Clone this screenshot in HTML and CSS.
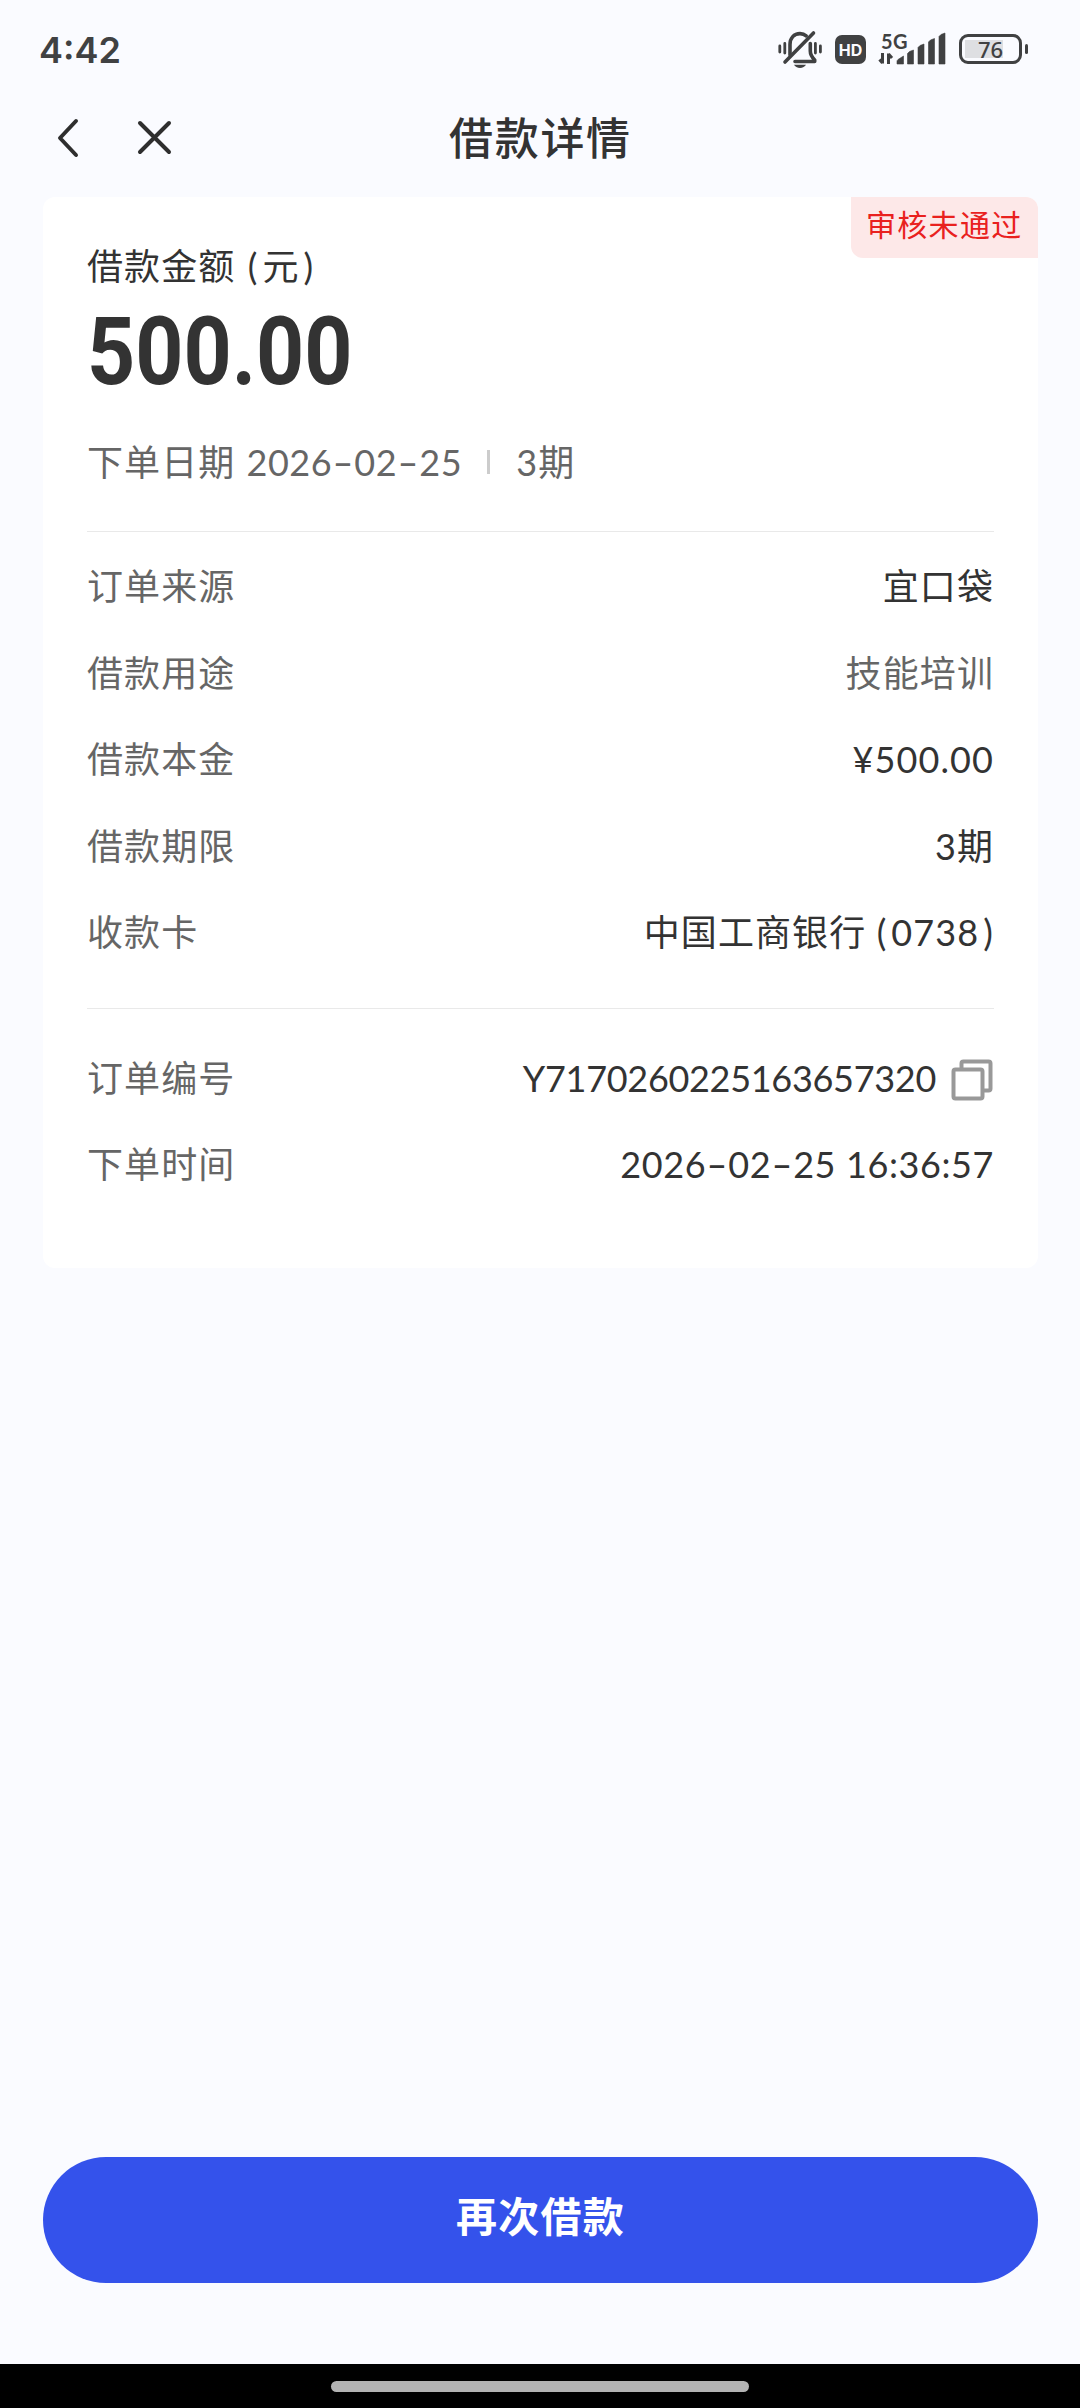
FILE: index.html
```html
<!DOCTYPE html>
<html lang="zh-CN">
<head>
<meta charset="utf-8">
<title>借款详情</title>
<link rel="stylesheet" href="styles.css">
</head>
<body>
<div class="screen">
  <div class="status">
    <span class="clock">4:42</span>
    <div class="status-icons">
      <svg class="i-mute" width="46" height="40" viewBox="0 0 46 40" fill="none" stroke="#404142" stroke-width="3.6" stroke-linecap="round" stroke-linejoin="round">
        <path d="M13 26V15.500C13 9 17 4.600 23 4.600c2.600 0 4.600.8 6.200 2.200M33.300 14.500v7.500c0 4 1.400 6 4.400 9v1.500H18"/>
        <path d="M36.500 4L8 33"/>
        <path d="M2.800 17v6M7.800 14.500v9.500M38.400 14.500v9.500M43.400 17v6" stroke-width="2.800"/>
        <path d="M17 35.800h12c-1 2-3.400 3.200-6 3.200s-5-1.200-6-3.200z" fill="#404142" stroke="none"/>
      </svg>
      <span class="hd">HD</span>
      <div class="signal">
        <span class="net">5G</span>
        <svg width="68" height="34" viewBox="0 0 68 34" fill="#404142">
          <path d="M4.500 21V31.500M4.500 31L1.500 27.500M10.500 32V21.500M10.500 22l3.500 4" stroke="#404142" stroke-width="3" fill="none"/>
          <path d="M19 32v-2.500q0-1.200 1-2l5.500-3.500V32zM29.500 32V21.500l2-2 4-1.500v14zM40 32V15.500l2-2 4-1.500v20zM50.500 32V10l2-2 4-1.500V32zM61 32V4.500l2-2 4-1.500v31z" stroke="#404142" stroke-width=".6" stroke-linejoin="round"/>
        </svg>
      </div>
      <div class="battery"><span class="cell">76</span><i class="tip"></i></div>
    </div>
  </div>

  <header class="header">
    <svg class="back" width="24" height="42" viewBox="0 0 24 42"><path d="M20 4L4 21l16 17"/></svg>
    <svg class="close" width="36" height="36" viewBox="0 0 36 36"><path d="M3 3l29 29M32 3L3 32"/></svg>
    <h1 class="title">借款详情</h1>
  </header>

  <main class="card">
    <span class="badge">审核未通过</span>
    <div class="caption">借款金额 <span class="open">(</span>元<span class="shut">)</span></div>
    <div class="amount">500.00</div>
    <div class="meta"><span>下单日期</span><span class="date">2026<span class="dash">-</span>02<span class="dash">-</span>25</span><i class="sep"></i><span>3期</span></div>
    <div class="rows first">
      <div class="row"><span class="label">订单来源</span><span class="value">宜口袋</span></div>
      <div class="row"><span class="label">借款用途</span><span class="value muted">技能培训</span></div>
      <div class="row"><span class="label">借款本金</span><span class="value">¥500.00</span></div>
      <div class="row"><span class="label">借款期限</span><span class="value">3期</span></div>
      <div class="row"><span class="label">收款卡</span><span class="value">中国工商银行 <span class="open">(</span>0738<span class="shut">)</span></span></div>
    </div>
    <div class="rows second">
      <div class="row"><span class="label">订单编号</span><span class="value order">Y7170260225163657320</span>
        <svg class="copy" width="42" height="42" viewBox="0 0 42 42"><rect x="2.500" y="10.500" width="29" height="29" rx="2"/><path d="M10.500 10V4.500q0-2 2-2h25q2 0 2 2v25q0 2-2 2H32"/></svg>
      </div>
      <div class="row"><span class="label">下单时间</span><span class="value time">2026<span class="dash">-</span>02<span class="dash">-</span>25 16:36:57</span></div>
    </div>
  </main>

  <button class="again">再次借款</button>
  <div class="navbar"><i class="pill"></i></div>
</div>
</body>
</html>
```
FILE: styles.css
```css
* { box-sizing: border-box; }
body {
  margin: 0;
  background: #fafbff;
  color: #333;
  font: 36px/50px Lato, "Noto Sans CJK SC", sans-serif;
}
.screen { display: flex; flex-direction: column; width: 1080px; height: 2408px; }

.status {
  display: flex; justify-content: space-between; align-items: center;
  height: 98px; padding: 0 52px 0 39px; color: #404142;
}
.clock { padding-top: 2px; font: 600 36px/40px Inter, sans-serif; letter-spacing: 0; }
.status-icons { display: flex; align-items: center; }
.hd {
  width: 31px; height: 29px; margin-left: 12px; border-radius: 7px;
  background: #404142; color: #fafbff; text-align: center;
  font: 700 16px/30px Inter, sans-serif;
}
.signal { position: relative; width: 68px; height: 34px; margin-left: 12px; }
.signal svg { display: block; }
.net { position: absolute; left: 3px; top: -2px; font: 700 20px/22px Lato, sans-serif; letter-spacing: .5px; }
.battery { display: flex; align-items: center; gap: 3px; margin-left: 13px; }
.cell {
  width: 63px; height: 30px; border: 3.500px solid #404142; border-radius: 9px;
  background: linear-gradient(#dedfe2, #dedfe2) 3px center / 38px 18px no-repeat;
  font: 500 22px/25px "Noto Sans", sans-serif; text-align: center;
}
.tip { width: 3px; height: 10px; border-radius: 2px; background: #404142; }

.header { display: flex; align-items: center; height: 99px; padding: 0 0 19px 56px; }
.header svg { fill: none; stroke: #2e2e2e; stroke-width: 4; stroke-linecap: round; stroke-linejoin: round; }
.close { margin-left: 57px; }
.title {
  margin: 0 0 0 276px; font-size: 44px; font-weight: 500; line-height: 60px;
  letter-spacing: 1.700px;
}

.card {
  position: relative; width: 995px; height: 1071px; margin-left: 43px;
  padding: 44px 44px 0; border-radius: 12px; background: #fff;
}
.badge {
  position: absolute; top: 0; right: 0; width: 187px; height: 61px; padding-left: 15px;
  border-radius: 0 12px 0 12px; background: #fde8e8; color: #e9211e;
  font-size: 30px; line-height: 55px; letter-spacing: 1.300px;
}
.caption { letter-spacing: 1.100px; word-spacing: 2px; }
.open { margin-right: 4px; }
.shut { margin-left: 4px; }
.amount {
  width: max-content; margin-top: 21px; font: 700 95px/80px Roboto, sans-serif;
  transform: scaleX(.885); transform-origin: left;
}
.meta { display: flex; align-items: center; margin-top: 45px; color: #666; letter-spacing: 1.100px; }
.date { margin-left: 11px; letter-spacing: .6px; }
/* wide date hyphen */
.dash { display: inline-block; width: 22px; text-align: center; letter-spacing: 0; transform: scaleX(1.6); }
.sep { width: 3px; height: 24px; margin: 0 26px 0 25px; background: #ccc; }
.rows { border-top: 1px solid #e9e9e9; }
.first { margin-top: 44px; padding-top: 11px; height: 477px; }
.second { padding-top: 26px; }
.row { display: flex; align-items: center; height: 86.500px; }
.second .row { height: 86px; }
.label { flex: 1; color: #666; letter-spacing: 1.100px; }
.value { letter-spacing: 1.100px; }
.muted { color: #666; }
.order { letter-spacing: -.3px; }
.time { letter-spacing: .6px; }
.copy { margin: 4px 1px 0 15px; fill: none; stroke: #999; stroke-width: 4; }

.again {
  width: 995px; height: 126px; margin: auto 0 81px 43px; padding: 0 0 12px; border: 0;
  border-radius: 63px; background: #3452eb; color: #fff;
  font: 700 41px/60px "Noto Sans CJK SC", sans-serif; letter-spacing: 1.200px;
}
.navbar { display: flex; justify-content: center; height: 44px; padding-top: 17px; background: #000; }
.pill { width: 418px; height: 11px; border-radius: 6px; background: #b3b3b3; }
```
